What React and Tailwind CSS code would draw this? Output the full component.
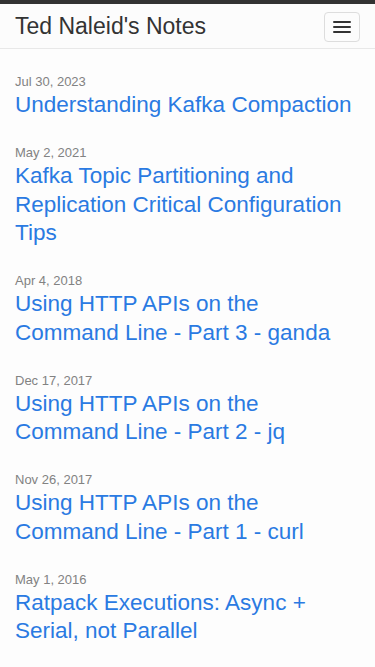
import React from 'react'

const posts = [
    { date: 'Jul 30, 2023', title: 'Understanding Kafka Compaction' },
    { date: 'May 2, 2021', title: 'Kafka Topic Partitioning and Replication Critical Configuration Tips' },
    { date: 'Apr 4, 2018', title: 'Using HTTP APIs on the Command Line - Part 3 - ganda' },
    { date: 'Dec 17, 2017', title: 'Using HTTP APIs on the Command Line - Part 2 - jq' },
    { date: 'Nov 26, 2017', title: 'Using HTTP APIs on the Command Line - Part 1 - curl' },
    { date: 'May 1, 2016', title: 'Ratpack Executions: Async + Serial, not Parallel' },
]

function Header() {
    return (
        <header className="border-t-4 border-[#333333] bg-[#fcfcfc] border-b border-b-[#e8e8e8]">
            <div className="flex items-center justify-between h-[44px] pl-[15px] pr-[15px]">
                <a href="#" className="text-[23px] leading-none text-[#333333]">Ted Naleid's Notes</a>
                <button className="flex flex-col items-center justify-center gap-[3px] w-[36px] h-[30px] border border-[#dddddd] rounded-[4px] mt-[1px]">
                    <span className="block w-[18px] h-[2px] bg-[#333333] rounded-[1px]"></span>
                    <span className="block w-[18px] h-[2px] bg-[#333333] rounded-[1px]"></span>
                    <span className="block w-[18px] h-[2px] bg-[#333333] rounded-[1px]"></span>
                </button>
            </div>
        </header>
    )
}

export default function App() {
    return (
        <div className="min-h-screen bg-[#fdfdfd]" style={{ fontFamily: '"Liberation Sans", Arial, sans-serif' }}>
            <Header />
            <main className="px-[15px] pt-[23px]">
                <ul>
                    {posts.map((p) => (
                        <li key={p.date} className="mb-[23.5px]">
                            <div className="text-[13px] leading-[19px] text-[#828282]">{p.date}</div>
                            <a href="#" className="block text-[22.5px] leading-[28.5px] text-[#2a7ae2]">{p.title}</a>
                        </li>
                    ))}
                </ul>
            </main>
        </div>
    )
}
